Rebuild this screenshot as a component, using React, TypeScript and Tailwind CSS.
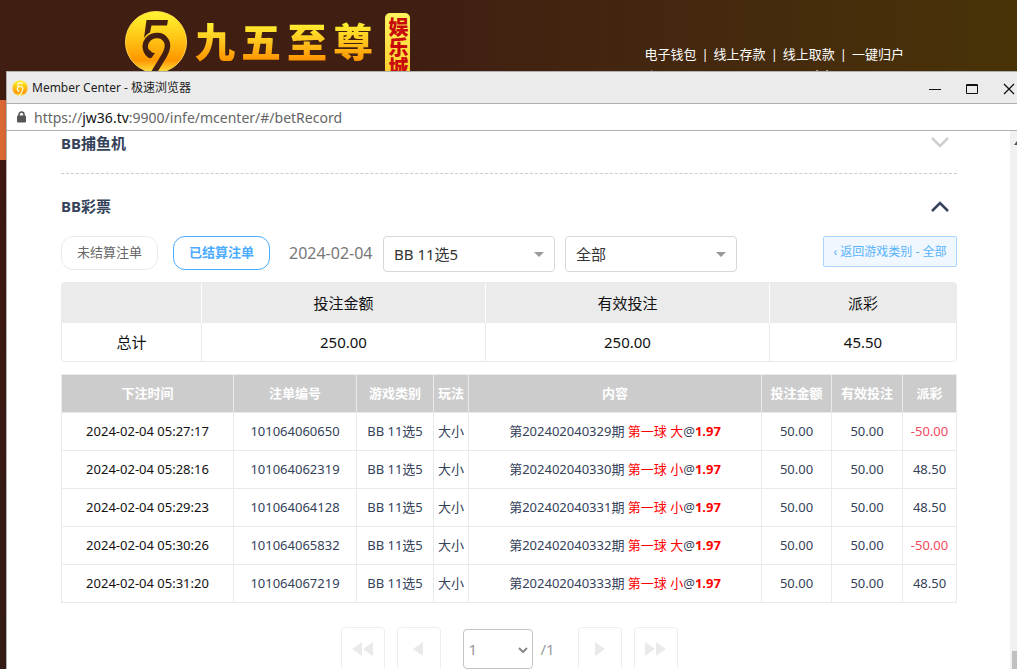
import { ReactNode } from "react";

const navLinks = ["电子钱包", "线上存款", "线上取款", "一键归户"];

const bets = [
  { time: "2024-02-04 05:27:17", id: "101064060650", issue: "202402040329", pick: "大", payout: "-50.00" },
  { time: "2024-02-04 05:28:16", id: "101064062319", issue: "202402040330", pick: "小", payout: "48.50" },
  { time: "2024-02-04 05:29:23", id: "101064064128", issue: "202402040331", pick: "小", payout: "48.50" },
  { time: "2024-02-04 05:30:26", id: "101064065832", issue: "202402040332", pick: "大", payout: "-50.00" },
  { time: "2024-02-04 05:31:20", id: "101064067219", issue: "202402040333", pick: "小", payout: "48.50" },
];

const columns = [
  { label: "下注时间", width: "w-[172px]" },
  { label: "注单编号", width: "w-[123px]" },
  { label: "游戏类别", width: "w-[77px]" },
  { label: "玩法", width: "w-[35px]" },
  { label: "内容", width: "" },
  { label: "投注金额", width: "w-[70px]" },
  { label: "有效投注", width: "w-[71px]" },
  { label: "派彩", width: "w-[54px]" },
];

const Coin = ({ className, id, ink }: { className: string; id: string; ink: string }) => (
  <svg viewBox="0 0 64 64" className={className} aria-hidden="true">
    <defs>
      <linearGradient id={id} x1="0" y1="0" x2="0" y2="1">
        <stop offset="0" stopColor="#fff532" />
        <stop offset="0.45" stopColor="#ffc414" />
        <stop offset="0.8" stopColor="#ff9600" />
        <stop offset="1" stopColor="#ffe23c" />
      </linearGradient>
    </defs>
    <circle cx="32" cy="32" r="30.5" fill={`url(#${id})`} stroke="#ffd94a" strokeWidth="1" />
    <path d="M22.500 10H44L43 15.500H27.500L26 22.500C24 23.500 22 25 20 28Z" fill={ink} />
    <path
      d="M27 46C21 43 19.500 35 23.500 30C28 24.500 37 24 41 29C45.500 34 43.500 40 40 46L29 64"
      fill="none"
      stroke={ink}
      strokeWidth="5.500"
    />
    <path d="M22 42C23 46 25 48 27.500 48L31 43C29 43.500 27 42 26 40Z" fill={ink} />
  </svg>
);

const Chevron = ({ up = false }: { up?: boolean }) => (
  <svg
    viewBox="0 0 18 11"
    className={up ? "h-[11px] w-[18px] rotate-180 text-[#34425a]" : "h-[11px] w-[18px] text-[#cfcfcf]"}
    fill="none"
    stroke="currentColor"
    strokeWidth="2.500"
  >
    <path d="M1 1L9 9L17 1" />
  </svg>
);

const FilterSelect = ({ label, value }: { label: string; value: string }) => (
  <div className="relative w-[172px]">
    <select
      aria-label={label}
      className="h-9 w-full appearance-none rounded border border-[#d8d8d8] bg-white px-[10px] text-[15px] text-[#333]"
    >
      <option>{value}</option>
    </select>
    <svg viewBox="0 0 10 5" className="pointer-events-none absolute top-4 right-[11px] h-[5px] w-[10px]">
      <path d="M0 0H10L5 5Z" fill="#999" />
    </svg>
  </div>
);

const PageButton = ({ label, children }: { label: string; children: ReactNode }) => (
  <button
    aria-label={label}
    className="flex h-11 w-11 items-center justify-center rounded border border-[#eee] text-[#eaeaea]"
  >
    <svg viewBox="0 0 22 14" className="h-[14px] w-[22px]" fill="currentColor">
      {children}
    </svg>
  </button>
);

const SiteHeader = () => (
  <header className="flex h-[100px] items-start bg-linear-to-r from-[#401e12] from-40% to-[#483307] pl-[124px]">
    <Coin id="coin-large" ink="#421f12" className="mt-[10px] h-16 w-16 shrink-0" />
    <div className="mt-[13px] ml-[7px] flex gap-[6px] text-[40px] leading-[58px] font-black">
      {["九", "五", "至", "尊"].map((char) => (
        <span
          key={char}
          className="bg-linear-to-b from-[#ffee30] from-20% to-[#ff9600] to-80% bg-clip-text text-transparent"
        >
          {char}
        </span>
      ))}
    </div>
    <div className="mt-[13px] ml-3 h-[72px] w-[25px] shrink-0 rounded-[5px] bg-linear-to-b from-[#fff45c] to-[#ffc61c] pt-1 text-[20px] leading-[25px] font-black text-[#c80a0a] [writing-mode:vertical-rl]">
      娱乐城
    </div>
    <div className="mt-11 mr-[113px] ml-auto shrink-0 text-[13px] leading-5 text-white">
      <nav className="flex">
        {navLinks.map((link, index) => (
          <span key={link}>
            {index > 0 && <span className="px-[5px]">|</span>}
            <a href="#">{link}</a>
          </span>
        ))}
      </nav>
      <div className="flex gap-[140px] pt-[2px]">
        <span>账号</span>
        <span>余额</span>
      </div>
    </div>
  </header>
);

const TitleBar = () => (
  <div className="flex h-[31px] items-center bg-[#ebebeb] pl-[5px] text-[#222]">
    <Coin id="coin-small" ink="#fff6c8" className="h-4 w-4" />
    <h1 className="ml-1 text-[12px]">Member Center - 极速浏览器</h1>
    <div className="ml-auto flex items-center gap-[25px] pt-[3px] pr-[2px] text-[#111]">
      <button aria-label="Minimize">
        <svg viewBox="0 0 12 12" className="h-3 w-3" stroke="currentColor">
          <path d="M0 6.500H12" />
        </svg>
      </button>
      <button aria-label="Maximize">
        <svg viewBox="0 0 12 12" className="h-3 w-3" fill="none" stroke="currentColor">
          <path d="M0.500 1.500H11.500V10.500H0.500ZM0 2.500H12" />
        </svg>
      </button>
      <button aria-label="Close">
        <svg viewBox="0 0 12 12" className="h-3 w-3" stroke="currentColor" strokeWidth="1.300">
          <path d="M1 1L11 11M11 1L1 11" />
        </svg>
      </button>
    </div>
  </div>
);

const AddressBar = () => (
  <div className="flex h-7 items-center border-y border-[#b0b0b0] bg-white pl-[10px] text-[14px] text-[#666]">
    <svg viewBox="0 0 9 12" className="mr-2 h-3 w-[9px]" fill="none">
      <path d="M2 5V3.500A2.500 2.500 0 0 1 7 3.500V5" stroke="#555" strokeWidth="1.500" />
      <rect y="4.500" width="9" height="7" rx="1" fill="#555" />
    </svg>
    <p>
      https://<span className="text-[#111]">jw36.tv</span>:9900/infe/mcenter/#/betRecord
    </p>
  </div>
);

const Filters = () => (
  <div className="flex items-start">
    <button className="h-[34px] w-[97px] rounded-xl border border-[#eaeaea] text-[13px] text-[#666]">
      未结算注单
    </button>
    <button className="ml-[15px] h-[34px] w-[97px] rounded-xl border border-[#4aabff] text-[13px] font-bold text-[#4aabff]">
      已结算注单
    </button>
    <span className="ml-[19px] w-[84px] text-[16px] leading-[34px] whitespace-nowrap text-[#777]">2024-02-04</span>
    <div className="ml-[10px] flex gap-[10px]">
      <FilterSelect label="游戏" value="BB 11选5" />
      <FilterSelect label="玩法" value="全部" />
    </div>
    <button className="ml-auto h-[31px] w-[134px] rounded-xs border border-[#a9d4ff] bg-[#f0f7ff] text-[12px] whitespace-nowrap text-[#57b3fb]">
      ‹ 返回游戏类别 - 全部
    </button>
  </div>
);

const SummaryTable = () => (
  <table className="mt-[10px] w-full table-fixed border-separate border-spacing-0 overflow-hidden rounded-sm border border-[#eaeaea] text-center text-[15px] text-[#111]">
    <thead>
      <tr className="h-10 bg-[#ebebeb]">
        <th className="w-[140px] border-r border-white"></th>
        <th className="border-r border-white font-normal">投注金额</th>
        <th className="border-r border-white font-normal">有效投注</th>
        <th className="w-[186px] font-normal">派彩</th>
      </tr>
    </thead>
    <tbody>
      <tr className="h-[38px]">
        <td className="border-r border-[#eaeaea]">总计</td>
        <td className="border-r border-[#eaeaea]">250.00</td>
        <td className="border-r border-[#eaeaea]">250.00</td>
        <td>45.50</td>
      </tr>
    </tbody>
  </table>
);

const BetTable = () => (
  <table className="mt-3 w-full table-fixed border-separate border-spacing-0 border-t border-l border-[#eaeaea] text-center text-[13px] text-[#34425a]">
    <thead>
      <tr className="h-[38px] bg-[#ccc] text-white">
        {columns.map((column) => (
          <th
            key={column.label}
            className={`${column.width} border-r border-b border-[#eaeaea] font-bold whitespace-nowrap`}
          >
            {column.label}
          </th>
        ))}
      </tr>
    </thead>
    <tbody className="[&_td]:border-r [&_td]:border-b [&_td]:border-[#eaeaea]">
      {bets.map((bet) => (
        <tr key={bet.id} className="h-[38px] whitespace-nowrap">
          <td className="text-[#111]">{bet.time}</td>
          <td>{bet.id}</td>
          <td>BB 11选5</td>
          <td>大小</td>
          <td>
            第{bet.issue}期 <span className="text-[#f00]">第一球 {bet.pick}</span>@
            <b className="text-[#f00]">1.97</b>
          </td>
          <td>50.00</td>
          <td>50.00</td>
          <td className={bet.payout.startsWith("-") ? "text-[#f8485e]" : ""}>{bet.payout}</td>
        </tr>
      ))}
    </tbody>
  </table>
);

const Pagination = () => (
  <div className="mt-6 flex justify-center gap-3">
    <PageButton label="First page">
      <path d="M10 0V14L0 7ZM21 0V14L11 7Z" />
    </PageButton>
    <PageButton label="Previous page">
      <path d="M15 0V14L5 7Z" />
    </PageButton>
    <div className="mx-[10px] flex items-start gap-2 pt-[2px] text-[15px] text-[#999]">
      <div className="relative">
        <select
          aria-label="Page"
          className="h-10 w-[70px] appearance-none rounded border border-[#c4c4c4] bg-white px-[5px]"
        >
          <option>1</option>
        </select>
        <svg
          viewBox="0 0 10 6"
          className="pointer-events-none absolute top-[18px] right-[5px] h-[6px] w-[10px]"
          fill="none"
          stroke="#888"
          strokeWidth="2"
        >
          <path d="M1 1L5 5L9 1" />
        </svg>
      </div>
      <span className="w-[15px] leading-10">/1</span>
    </div>
    <PageButton label="Next page">
      <path d="M6 0V14L16 7Z" />
    </PageButton>
    <PageButton label="Last page">
      <path d="M0 0V14L10 7ZM11 0V14L21 7Z" />
    </PageButton>
  </div>
);

const App = () => {
  return (
    <div className="relative h-screen overflow-hidden bg-linear-to-b from-[#421710] to-[#361c17] font-['Noto_Sans','Noto_Sans_CJK_SC',sans-serif]">
      <SiteHeader />
      <div className="h-[60px] bg-[#dc6838]" />

      {/* Member center popup */}
      <div className="absolute top-[71px] right-0 bottom-0 left-[6px] flex flex-col border-t border-l border-[#b0b0b0] bg-white shadow-md">
        <TitleBar />
        <AddressBar />
        <div className="flex min-h-0 flex-1">
          <main className="min-w-0 flex-1 overflow-hidden pr-[53px] pl-[54px]">
            <section className="flex h-[43px] justify-between border-b border-dashed border-[#ccc] pr-2">
              <h2 className="text-[15px] leading-6 font-bold text-[#34425a]">BB捕鱼机</h2>
              <button aria-label="展开" className="h-[22px]">
                <Chevron />
              </button>
            </section>
            <section>
              <div className="flex h-[62px] items-center justify-between pt-[2px] pr-2">
                <h2 className="text-[15px] font-bold text-[#34425a]">BB彩票</h2>
                <button aria-label="收起">
                  <Chevron up />
                </button>
              </div>
              <Filters />
              <SummaryTable />
              <BetTable />
              <Pagination />
            </section>
          </main>
          <div className="flex w-[7px] shrink-0 flex-col items-end justify-between overflow-hidden bg-[#f1f1f1]">
            <svg viewBox="0 0 3 4" className="mt-[10px] h-1 w-[3px]">
              <path d="M0 4L3 0V4Z" fill="#505050" />
            </svg>
            <div className="h-[18px] w-[5px] bg-[#c1c1c1]" />
          </div>
        </div>
      </div>
    </div>
  );
};

export default App;
